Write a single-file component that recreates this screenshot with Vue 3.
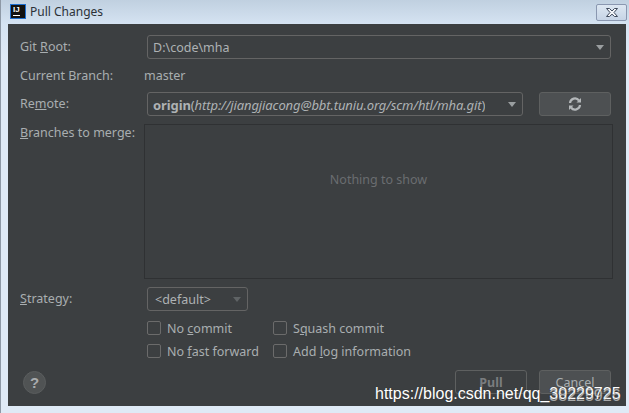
<script setup>
const underline = (a, b, c) => ({ a, b, c })
const checks = [
  [underline('No ', 'c', 'ommit'), underline('S', 'q', 'uash commit')],
  [underline('No ', 'f', 'ast forward'), underline('Add ', 'l', 'og information')],
]
</script>

<template>
  <div class="window">
    <header class="titlebar">
      <div class="appicon"><span>IJ</span><i></i></div>
      <div class="title">Pull Changes</div>
      <button class="close" aria-label="Close">
        <svg width="16" height="11" viewBox="0 0 16 11"><path d="M2.500 1.500h3L8 4l2.500-2.500h3L10 5.500l3.500 4h-3L8 7.200 5.500 9.500h-3L6 5.500z" fill="#f4f6fa" stroke="#3f4a5c" stroke-width="1"/></svg>
      </button>
    </header>

    <main class="dialog">
      <div class="row first">
        <label class="lbl">Git <u>R</u>oot:</label>
        <div class="combo wide"><span>D:\code\mha</span><b class="arrow"></b></div>
      </div>
      <div class="row branch">
        <label class="lbl">Current Branch:</label>
        <span class="value">master</span>
      </div>
      <div class="row remote">
        <label class="lbl">Re<u>m</u>ote:</label>
        <div class="combo rem">
          <span class="url"><strong>origin</strong>(<em>http://jiangjiacong@bbt.tuniu.org/scm/htl/mha.git</em>)</span>
          <b class="arrow"></b>
        </div>
        <button class="btn refresh" aria-label="Refresh">
          <svg width="14" height="14" viewBox="0 0 14 14" fill="none" stroke="#b4b8ba" stroke-width="2.200">
            <path d="M2 6A5 5 0 0 1 11 3.500"/>
            <path d="M12 8A5 5 0 0 1 3 10.500"/>
            <path d="M8.500 5.500H13V1z" fill="#b4b8ba" stroke="none"/>
            <path d="M5.500 8.500H1V13z" fill="#b4b8ba" stroke="none"/>
          </svg>
        </button>
      </div>
      <div class="row branches">
        <label class="lbl"><u>B</u>ranches to merge:</label>
        <div class="panel">Nothing to show</div>
      </div>
      <div class="row strategy">
        <label class="lbl"><u>S</u>trategy:</label>
        <div class="combo strat"><span>&lt;default&gt;</span><b class="arrow dim"></b></div>
      </div>
      <div class="checks">
        <div v-for="(pair, i) in checks" :key="i" class="checkrow">
          <label v-for="(c, j) in pair" :key="j" class="check">
            <span class="box"></span>
            <span>{{ c.a }}<u>{{ c.b }}</u>{{ c.c }}</span>
          </label>
        </div>
      </div>
      <footer class="foot">
        <div class="help">?</div>
        <div class="actions">
          <button class="btn pull">Pull</button>
          <button class="btn cancel">Cancel</button>
        </div>
      </footer>
    </main>

    <div class="mark">https://blog.csdn.net/qq_<span class="num"><span>30229725</span><span class="ghost">38225926</span></span></div>
  </div>
</template>

<style>
html, body { margin: 0; background: #dfeaf6; }
</style>

<style scoped>
.window {
  position: relative;
  width: 629px;
  height: 413px;
  overflow: hidden;
  box-sizing: border-box;
  display: flex;
  flex-direction: column;
  padding: 0 3px 7px 7px;
  background: linear-gradient(#c0d0e0 0, #d5e3f2 24px, #dfeaf6 60px);
  border-left: 1px solid #8e99a6;
  font-family: "Noto Sans", "Open Sans", sans-serif;
  font-size: 12.5px;
  color: #a9aeb0;
}
.titlebar {
  height: 24px;
  flex: none;
  display: flex;
  align-items: center;
  position: relative;
}
.appicon {
  width: 16px;
  height: 15px;
  box-sizing: border-box;
  background: #111;
  border: 1px solid #1f6fd0;
  margin: -2px 0 0 2px;
  position: relative;
  flex: none;
}
.appicon span {
  position: absolute;
  left: 2px;
  top: 0;
  font: bold 8px/9px "Liberation Sans", sans-serif;
  color: #fff;
}
.appicon i {
  position: absolute;
  left: 2px;
  bottom: 2px;
  width: 7px;
  height: 1px;
  background: #fff;
}
.title {
  margin: -2px 0 0 4px;
  font-size: 12px;
  color: #2c3138;
}
.close {
  position: absolute;
  right: -1px;
  top: 4px;
  width: 31px;
  height: 17px;
  padding: 0;
  box-sizing: border-box;
  display: flex;
  align-items: center;
  justify-content: center;
  border: 1px solid #8a97b0;
  border-radius: 2px;
  background: linear-gradient(#dde7f2, #c6d4e6);
}
.dialog {
  flex: 1;
  background: #3c3f41;
  display: flex;
  flex-direction: column;
  padding: 11px 15px 11px 12px;
  position: relative;
}
.row {
  display: flex;
  align-items: center;
}
.lbl {
  width: 127px;
  flex: none;
  white-space: nowrap;
  padding-bottom: 2px;
}
.combo {
  height: 24px;
  box-sizing: border-box;
  border: 1px solid #646464;
  border-radius: 3px;
  background: #3c3f41;
  display: flex;
  align-items: center;
  justify-content: space-between;
  padding: 1px 6px 0 5px;
  white-space: nowrap;
  color: #aeb2b4;
}
.wide { width: 464px; }
.rem { width: 376px; }
.strat { width: 101px; padding-left: 7px; }
.arrow {
  width: 0;
  height: 0;
  border-left: 4.500px solid transparent;
  border-right: 4.500px solid transparent;
  border-top: 5px solid #9a9ea0;
}
.arrow.dim { border-top-color: #5f6365; }
.branch { margin-top: 5px; height: 24px; }
.value { margin-left: -3px; padding-bottom: 2px; }
.remote { margin-top: 4px; }
.url { overflow: hidden; font-size: 13px; letter-spacing: -0.1px; }
.url strong { font-weight: 700; }
.btn {
  width: 72px;
  height: 24px;
  padding: 0 0 0 0;
  box-sizing: border-box;
  border: 1px solid #5e6060;
  border-radius: 3px;
  background: #4d5052;
  color: #a9aeb0;
  font: 12.500px "Noto Sans", sans-serif;
  display: flex;
  align-items: center;
  justify-content: center;
}
.refresh { margin-left: 16px; }
.branches {
  align-items: flex-start;
  margin-top: 8px;
}
.branches .lbl { width: 124px; }
.panel {
  width: 469px;
  height: 155px;
  box-sizing: border-box;
  border: 1px solid #2f3133;
  padding-bottom: 44px;
  display: flex;
  align-items: center;
  justify-content: center;
  color: #6a6d70;
  flex: none;
}
.strategy { margin-top: 8px; }
.checks {
  margin: 8px 0 0 127px;
  display: flex;
  flex-direction: column;
  gap: 5px;
}
.checkrow { display: flex; height: 18px; }
.check {
  width: 126px;
  display: flex;
  align-items: center;
  gap: 6px;
  white-space: nowrap;
}
.box {
  width: 14px;
  height: 14px;
  box-sizing: border-box;
  border: 1px solid #6b6b6b;
  border-radius: 2px;
  background: #3c3f41;
  flex: none;
}
.foot {
  display: flex;
  justify-content: space-between;
  align-items: center;
  margin-top: 10px;
}
.help {
  width: 23px;
  height: 23px;
  margin-left: 3px;
  border-radius: 50%;
  background: #505354;
  border: 1px solid #5a5d5e;
  box-sizing: border-box;
  color: #a9acae;
  font: bold 15px/21px "Liberation Sans", sans-serif;
  text-align: center;
}
.actions { display: flex; gap: 12px; }
.pull {
  background: #3c3f41;
  color: #7a7d7f;
  font-weight: 700;
}
.mark {
  position: absolute;
  left: 374px;
  top: 383px;
  font: 16px/22px "Liberation Sans", sans-serif;
  color: #fff;
  white-space: nowrap;
  text-shadow: 0 0 1px #333;
}
.num { position: relative; }
.ghost { position: absolute; left: 0; top: 0; opacity: .55; }
</style>
